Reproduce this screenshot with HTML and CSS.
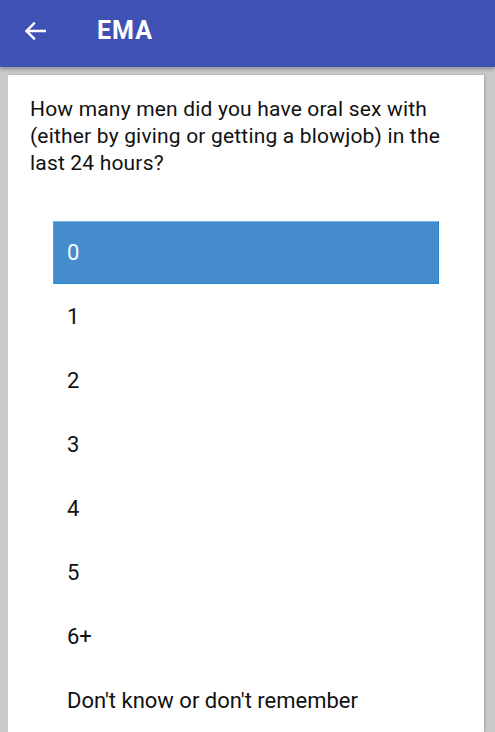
FILE: index.html
```html
<!DOCTYPE html>
<html>
<head>
<meta charset="utf-8">
<link rel="stylesheet" href="styles.css">
</head>
<body>
<header class="appbar">
  <span class="back">
    <svg width="22" height="18" viewBox="0 0 22 18"><path d="M21 9H2.5M10 1.5L2.5 9L10 16.5" fill="none" stroke="#fff" stroke-width="2.4" stroke-linecap="square"/></svg>
  </span>
  <h1 class="title">EMA</h1>
</header>
<main class="page">
  <section class="card">
    <p class="question">How many men did you have oral sex with (either by giving or getting a blowjob) in the last 24 hours?</p>
    <ul class="options">
      <li class="option selected">0</li>
      <li class="option">1</li>
      <li class="option">2</li>
      <li class="option">3</li>
      <li class="option">4</li>
      <li class="option">5</li>
      <li class="option">6+</li>
      <li class="option">Don't know or don't remember</li>
    </ul>
  </section>
</main>
</body>
</html>
```
FILE: styles.css
```css
html, body {
  margin: 0;
  padding: 0;
  height: 100%;
  overflow: hidden;
}
body {
  background: #c9c9c9;
  font-family: Roboto, "Noto Sans", sans-serif;
  display: flex;
  flex-direction: column;
}
.appbar {
  flex: none;
  height: 67px;
  background: #3f51b5;
  display: flex;
  align-items: center;
  box-shadow: 0 2px 4px rgba(0,0,0,0.3);
  position: relative;
  z-index: 1;
}
.back {
  width: 22px;
  height: 18px;
  margin-left: 24px;
  margin-top: -6px;
  display: flex;
}
.title {
  margin: 0 0 0 51px;
  margin-top: -6px;
  color: #fff;
  font-size: 25px;
  font-weight: 700;
  letter-spacing: 1px;
}
.page {
  flex: 1;
  min-height: 0;
  display: flex;
  padding: 8px 11px 0 8px;
}
.card {
  flex: 1;
  background: #fff;
  padding: 21px 22px 0 22px;
  box-shadow: 1px 0 2px rgba(0,0,0,0.2);
  overflow: hidden;
}
.question {
  margin: 0;
  font-size: 21px;
  line-height: 27px;
  letter-spacing: 0.18px;
  color: #111;
}
.options {
  list-style: none;
  margin: 44px 23px 0 23px;
  padding: 0;
}
.option {
  height: 63px;
  margin-bottom: 1px;
  display: flex;
  align-items: center;
  padding-left: 14px;
  font-size: 22px;
  color: #111;
  box-sizing: border-box;
}
.option.selected {
  background: #448ccb;
  color: #fff;
  border-right: 1px solid #1e88d6;
  border-bottom: 1px solid #1e88d6;
  border-top: 1px solid #7fb3e0;
  border-left: 1px solid #5a9ad2;
  padding-left: 13px;
}
```
